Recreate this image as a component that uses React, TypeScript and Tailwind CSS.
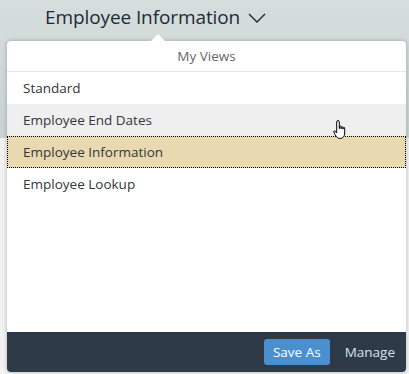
const views = ["Standard", "Employee End Dates", "Employee Information", "Employee Lookup"];

export default function App() {
  return (
    <main
      className="relative h-[374px] w-[409px] overflow-hidden bg-[#f2f2f2]"
      style={{ fontFamily: '"Open Sans", "Liberation Sans", sans-serif' }}
    >
      {/* page behind the popover */}
      <div className="h-[138px] bg-gradient-to-b from-[#d6dedd] to-[#c9d3d2]">
        <div className="flex items-center gap-[8px] pl-[45px] pt-[3px]">
          <h1 className="text-[19px] leading-[28px] tracking-[-0.1px] text-[#1c2a38]">Employee Information</h1>
          <svg width="18" height="10" viewBox="0 0 18 10" className="mt-[2px]">
            <path d="M1 1l8 8 8-8" fill="none" stroke="#1c2a38" strokeWidth="1.4" />
          </svg>
        </div>
      </div>

      {/* popover */}
      <div className="absolute left-[7px] top-[41px] flex h-[331px] w-[399px] flex-col rounded-[4px] bg-white shadow-[0_0_4px_rgba(0,0,0,0.25)]">
        <div className="absolute -top-[7px] left-[143px] h-0 w-0 border-x-[8px] border-b-[8px] border-x-transparent border-b-white" />
        <div className="flex h-[31px] items-center justify-center border-b border-[#e5e5e5] text-[13.5px] text-[#666]">
          My Views
        </div>
        <ul className="text-[13.5px] text-[#32363a]">
          {views.map((v, i) => (
            <li
              key={v}
              className={
                i === 1
                  ? "flex h-[32px] items-center bg-[#efefef] px-4"
                  : i === 2
                  ? "flex h-[32px] items-center border border-dotted border-black bg-[#e8d9b1] px-[15px]"
                  : "flex h-[32px] items-center px-4"
              }
            >
              {v}
            </li>
          ))}
        </ul>
        <div className="mt-auto flex h-[40px] items-center justify-end gap-[15px] rounded-b-[4px] bg-[#2e3a47] pr-[11px]">
          <button className="h-[26px] rounded-[3px] bg-[#4a8fd0] px-[9px] text-[13.5px] text-white">Save As</button>
          <button className="text-[13.5px] text-[#d7e3f0]">Manage</button>
        </div>
      </div>

      {/* hand cursor */}
      <svg className="absolute left-[333px] top-[119px]" width="18" height="22" viewBox="0 0 18 22">
        <path
          d="M5 1.5c.8 0 1.3.6 1.3 1.4v6.6h.4V7.6c0-.8 1.4-.8 1.4 0v2h.4V8.3c0-.8 1.4-.8 1.4 0v1.6h.4V9c0-.8 1.4-.8 1.4 0v5c0 3-1.6 5.5-4.4 5.5S3.5 18 2 15.5L.8 12.9c-.4-.8.6-1.4 1.2-.8l1.7 1.9V2.9c0-.8.5-1.4 1.3-1.4z"
          fill="white"
          stroke="black"
          strokeWidth="1"
        />
      </svg>
    </main>
  );
}
